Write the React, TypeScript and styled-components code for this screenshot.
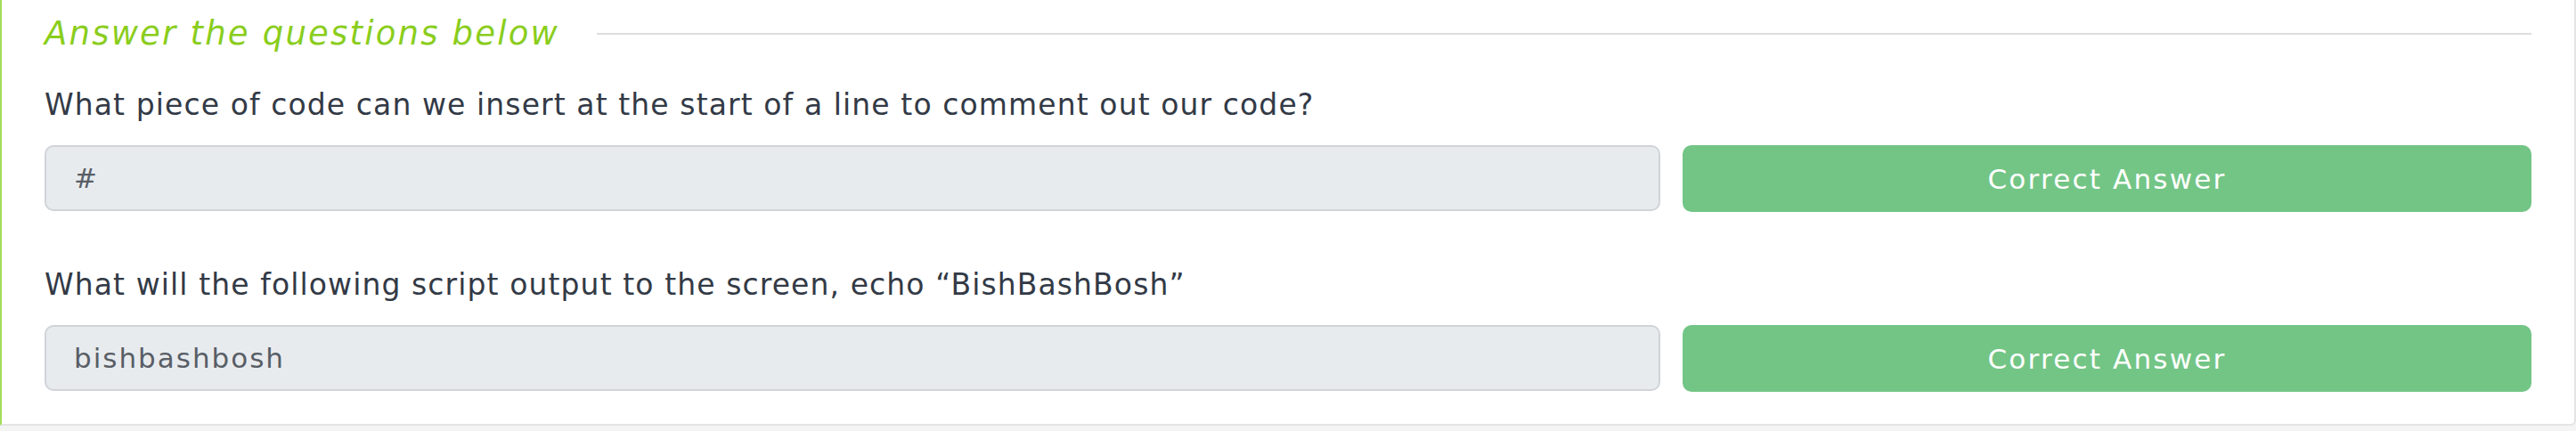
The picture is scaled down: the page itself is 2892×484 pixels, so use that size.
import React from "react";
import styled, { createGlobalStyle } from "styled-components";

const GlobalStyle = createGlobalStyle`
  html, body {
    margin: 0;
    padding: 0;
    background: #f4f4f4;
  }
  * { box-sizing: border-box; }
`;

const Card = styled.section`
  background: #ffffff;
  border-left: 2px solid #a3dc5c;
  border-right: 2px solid #e4e4e4;
  border-bottom: 2px solid #e4e4e4;
  border-bottom-right-radius: 6px;
  padding: 18px 48px 36px 48px;
  font-family: "DejaVu Sans", "Open Sans", sans-serif;
`;

const Header = styled.div`
  display: flex;
  align-items: center;
  gap: 42px;
  height: 40px;
`;

const Title = styled.h3`
  margin: 0;
  font-size: 37px;
  font-weight: 400;
  font-style: italic;
  letter-spacing: 2.2px;
  color: #8acd1c;
  line-height: 40px;
  white-space: nowrap;
`;

const Rule = styled.div`
  flex: 1;
  height: 2px;
  background: #dedede;
`;

const Question = styled.div<{ $gap: number }>`
  margin-top: ${(p) => p.$gap}px;
`;

const QuestionText = styled.p`
  margin: 0;
  font-size: 33px;
  letter-spacing: 1.1px;
  line-height: 44px;
  color: #333a46;
`;

const AnswerRow = styled.div`
  display: flex;
  gap: 25px;
  margin-top: 23px;
`;

const AnswerInput = styled.input`
  flex: 1;
  min-width: 0;
  height: 74px;
  background: #e8ebee;
  border: 2px solid #d0d4d9;
  border-radius: 10px;
  padding: 0 31px;
  font-family: "DejaVu Sans", "Open Sans", sans-serif;
  font-size: 31px;
  letter-spacing: 2px;
  color: #585e66;
  outline: none;
`;

const SubmitButton = styled.button`
  width: 953px;
  height: 75px;
  flex: none;
  background: #73c586;
  border: none;
  border-radius: 10px;
  color: #ffffff;
  font-family: "DejaVu Sans", "Open Sans", sans-serif;
  font-size: 31px;
  font-weight: 400;
  letter-spacing: 2.2px;
  cursor: pointer;
`;

const questions = [
  {
    text: "What piece of code can we insert at the start of a line to comment out our code?",
    answer: "#",
    gap: 38,
  },
  {
    text: "What will the following script output to the screen, echo \u201CBishBashBosh\u201D",
    answer: "bishbashbosh",
    gap: 60,
  },
];

export default function App() {
  return (
    <>
      <GlobalStyle />
      <Card>
        <Header>
          <Title>Answer the questions below</Title>
          <Rule />
        </Header>
        {questions.map((q) => (
          <Question key={q.text} $gap={q.gap}>
            <QuestionText>{q.text}</QuestionText>
            <AnswerRow>
              <AnswerInput readOnly value={q.answer} />
              <SubmitButton type="button">Correct Answer</SubmitButton>
            </AnswerRow>
          </Question>
        ))}
      </Card>
    </>
  );
}
